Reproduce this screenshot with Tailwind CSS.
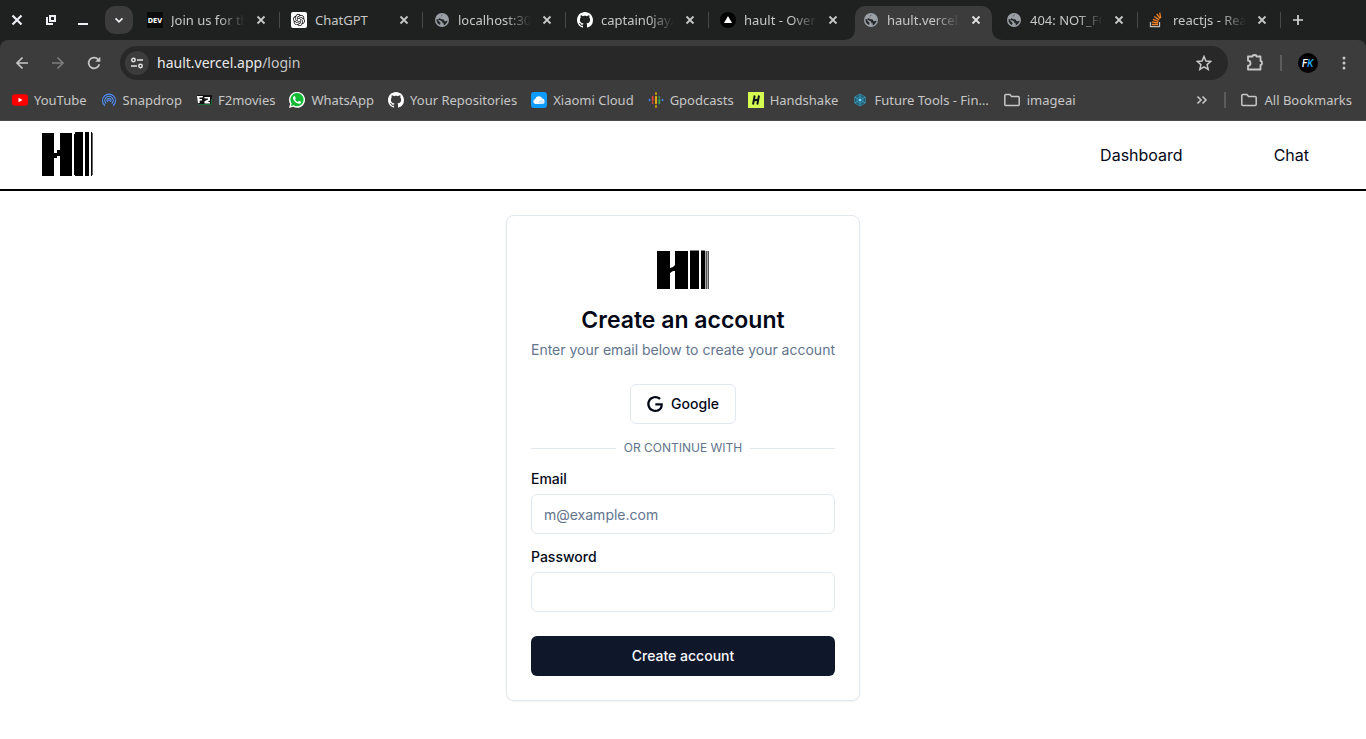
<!DOCTYPE html>
<html lang="en">
<head>
<meta charset="utf-8">
<meta name="viewport" content="width=device-width, initial-scale=1">
<title>hault</title>
<script src="https://cdn.jsdelivr.net/npm/@tailwindcss/browser@4"></script>
</head>
<body class="min-h-screen bg-white font-['Inter',sans-serif] text-[#020817]">

<svg class="hidden" aria-hidden="true">
  <symbol id="globe" viewBox="0 0 16 16"><circle cx="8" cy="8" r="7" fill="#9aa0a6"/><path fill="#25282b" d="M9 2.500C7.500 3 6.800 3.800 7.300 4.800c-1.500.2-1.600 1.600-.6 2.200.9.500 2.100 0 2.800.600.7.700.7 1.500 1.600 1.700.9.100 1.300-.6 2.500-.500-.4 2.200-1.900 3.900-3.900 4.600-.2-.8.100-1.400.4-2-.9.200-1.700-.3-1.900-1.200C7.900 8.800 5.500 8.500 4.700 7.800 4.200 7.300 3.300 7 2.500 7c-.3 2.700 1.200 5 3.500 6l.5-1.500c.2-.7-.2-1.100-.7-1.500-.8-.6-1.700-1.300-1.500-2.500z"/></symbol>
  <symbol id="close" viewBox="0 0 16 16"><path d="M4.500 4.500l7 7m0-7l-7 7" fill="none" stroke="currentColor" stroke-width="1.800"/></symbol>
  <symbol id="folder" viewBox="0 0 18 16"><path d="M2.800 2.500h4l1.800 2h6.600q1 0 1 1v7q0 1-1 1H2.800q-1 0-1-1v-9q0-1 1-1z" fill="none" stroke="currentColor" stroke-width="1.500"/></symbol>
  <symbol id="github" viewBox="0 0 16 16"><path fill="#fff" d="M8 0C3.58 0 0 3.58 0 8c0 3.54 2.29 6.53 5.47 7.59.4.07.55-.17.55-.38 0-.19-.01-.82-.01-1.490-2.010.37-2.530-.49-2.690-.94-.09-.23-.48-.94-.82-1.130-.28-.15-.68-.52-.01-.53.63-.01 1.080.58 1.230.82.72 1.210 1.870.87 2.330.66.07-.52.28-.87.51-1.070-1.780-.2-3.640-.89-3.640-3.950 0-.87.31-1.590.82-2.150-.08-.2-.36-1.020.08-2.120 0 0 .67-.21 2.200.82.64-.18 1.320-.27 2-.27s1.360.09 2 .27c1.530-1.040 2.200-.82 2.200-.82.44 1.100.16 1.920.08 2.120.51.56.82 1.270.82 2.150 0 3.070-1.870 3.750-3.650 3.950.29.25.54.73.54 1.480 0 1.070-.01 1.930-.01 2.200 0 .21.15.46.55.38A8.010 8.010 0 0 0 16 8c0-4.420-3.580-8-8-8z"/></symbol>
</svg>

<header class="bg-[#1f2120] font-['Noto_Sans',sans-serif] text-[13px] leading-5 text-[#c7c7c7]">
  <!-- Tab strip -->
  <div class="flex h-10 items-center">
    <div class="flex shrink-0 items-center pl-2 pr-1 text-[#eeeef4]">
      <button aria-label="Close window" class="flex w-[18px] justify-center"><svg class="size-4" viewBox="0 0 16 16"><path d="M3.500 3.500l9 9m0-9l-9 9" stroke="currentColor" stroke-width="2.200"/></svg></button>
      <button aria-label="Restore window" class="ml-4 flex w-[18px] justify-center"><svg class="size-4" viewBox="0 0 16 16" fill="none" stroke="currentColor" stroke-width="2"><path d="M7 4h5v5H7zM4 5v7h6"/></svg></button>
      <button aria-label="Minimize window" class="ml-3.5 flex w-[18px] justify-center"><svg class="size-4" viewBox="0 0 16 16"><path d="M3 12h10" stroke="currentColor" stroke-width="2"/></svg></button>
      <button aria-label="Search tabs" class="ml-[13px] flex size-7 items-center justify-center rounded-[10px] bg-[#3c3c3c]"><svg class="size-4" viewBox="0 0 16 16"><path d="M4.500 6.300L8 9.800l3.500-3.500" fill="none" stroke="currentColor" stroke-width="1.700"/></svg></button>
    </div>
    <div class="flex h-full min-w-0 items-center" role="tablist">
      <div role="tab" class="flex h-full w-[143px] min-w-0 items-center pl-2.5">
        <svg class="size-4 shrink-0" viewBox="0 0 16 16"><path fill="#0a0a0a" d="M0 0h16v16H0z"/><text x="8" y="11" text-anchor="middle" font-family="DejaVu Sans Condensed, Roboto, sans-serif" font-weight="700" font-size="7" fill="#fff">DEV</text></svg>
        <span class="ml-2 min-w-0 flex-1 overflow-hidden whitespace-nowrap [mask-image:linear-gradient(to_right,black_65%,transparent)]">Join us for th</span>
        <button aria-label="Close tab" class="ml-2 mr-[10px] shrink-0"><svg class="size-4"><use href="#close"/></svg></button><i class="h-4 w-px shrink-0 bg-[#47484a]"></i>
      </div>
      <div role="tab" class="flex h-full w-[143px] min-w-0 items-center pl-[11px]">
        <svg class="size-4 shrink-0" viewBox="0 0 32 32"><rect width="32" height="32" rx="4" fill="#fff"/><path transform="translate(4 4)" fill="#111" d="M22.2819 9.8211a5.9847 5.9847 0 0 0-.5157-4.9108 6.0462 6.0462 0 0 0-6.5098-2.9A6.0651 6.0651 0 0 0 4.9807 4.1818a5.9847 5.9847 0 0 0-3.9977 2.9 6.0462 6.0462 0 0 0 .7427 7.0966 5.98 5.98 0 0 0 .511 4.9107 6.051 6.051 0 0 0 6.5146 2.9001A5.9847 5.9847 0 0 0 13.2599 24a6.0557 6.0557 0 0 0 5.7718-4.2058 5.9894 5.9894 0 0 0 3.9977-2.9001 6.0557 6.0557 0 0 0-.7475-7.0729zm-9.022 12.6081a4.4755 4.4755 0 0 1-2.8764-1.0408l.1419-.0804 4.7783-2.7582a.7948.7948 0 0 0 .3927-.6813v-6.7369l2.02 1.1686a.071.071 0 0 1 .038.052v5.5826a4.504 4.504 0 0 1-4.4945 4.4944zm-9.6607-4.1254a4.4708 4.4708 0 0 1-.5346-3.0137l.142.0852 4.783 2.7582a.7712.7712 0 0 0 .7806 0l5.8428-3.3685v2.3324a.0804.0804 0 0 1-.0332.0615L9.74 19.9502a4.4992 4.4992 0 0 1-6.1408-1.6464zM2.3408 7.8956a4.485 4.485 0 0 1 2.3655-1.9728V11.6a.7664.7664 0 0 0 .3879.6765l5.8144 3.3543-2.0201 1.1685a.0757.0757 0 0 1-.071 0l-4.8303-2.7865A4.504 4.504 0 0 1 2.3408 7.872zm16.5963 3.8558L13.1038 8.364 15.1192 7.2a.0757.0757 0 0 1 .071 0l4.8303 2.7913a4.4944 4.4944 0 0 1-.6765 8.1042v-5.6772a.79.79 0 0 0-.407-.667zm2.0107-3.0231l-.142-.0852-4.7735-2.7818a.7759.7759 0 0 0-.7854 0L9.409 9.2297V6.8974a.0662.0662 0 0 1 .0284-.0615l4.8303-2.7866a4.4992 4.4992 0 0 1 6.6802 4.66zM8.3065 12.863l-2.02-1.1638a.0804.0804 0 0 1-.038-.0567V6.0742a4.4992 4.4992 0 0 1 7.3757-3.4537l-.142.0805L8.704 5.459a.7948.7948 0 0 0-.3927.6813zm1.0976-2.3654l2.602-1.4998 2.6069 1.4998v2.9994l-2.5974 1.4997-2.6067-1.4997Z"/></svg>
        <span class="ml-2 min-w-0 flex-1 overflow-hidden whitespace-nowrap">ChatGPT</span>
        <button aria-label="Close tab" class="ml-2 mr-[10px] shrink-0"><svg class="size-4"><use href="#close"/></svg></button><i class="h-4 w-px shrink-0 bg-[#47484a]"></i>
      </div>
      <div role="tab" class="flex h-full w-[143px] min-w-0 items-center pl-[11px]">
        <svg class="size-4 shrink-0"><use href="#globe"/></svg>
        <span class="ml-2 min-w-0 flex-1 overflow-hidden whitespace-nowrap [mask-image:linear-gradient(to_right,black_65%,transparent)]">localhost:30</span>
        <button aria-label="Close tab" class="ml-2 mr-[10px] shrink-0"><svg class="size-4"><use href="#close"/></svg></button><i class="h-4 w-px shrink-0 bg-[#47484a]"></i>
      </div>
      <div role="tab" class="flex h-full w-[143px] min-w-0 items-center pl-[11px]">
        <svg class="size-4 shrink-0"><use href="#github"/></svg>
        <span class="ml-2 min-w-0 flex-1 overflow-hidden whitespace-nowrap [mask-image:linear-gradient(to_right,black_65%,transparent)]">captain0jay/</span>
        <button aria-label="Close tab" class="ml-2 mr-[10px] shrink-0"><svg class="size-4"><use href="#close"/></svg></button><i class="h-4 w-px shrink-0 bg-[#47484a]"></i>
      </div>
      <div role="tab" class="flex h-full w-[143px] min-w-0 items-center pl-[11px]">
        <svg class="size-4 shrink-0" viewBox="0 0 16 16"><circle cx="8" cy="8" r="8" fill="#000"/><path fill="#fff" d="M8 4l4 7H4z"/></svg>
        <span class="ml-2 min-w-0 flex-1 overflow-hidden whitespace-nowrap [mask-image:linear-gradient(to_right,black_65%,transparent)]">hault - Over</span>
        <button aria-label="Close tab" class="ml-2 mr-[11px] shrink-0"><svg class="size-4"><use href="#close"/></svg></button>
      </div>
      <div role="tab" aria-selected="true" class="relative flex h-full w-[143px] min-w-0 items-end px-[3px]">
        <svg class="absolute bottom-0 -left-[7px] size-2.5" viewBox="0 0 10 10"><path fill="#3c3c3c" d="M10 0v10H0A10 10 0 0 0 10 0z"/></svg>
        <svg class="absolute bottom-0 -right-[7px] size-2.5" viewBox="0 0 10 10"><path fill="#3c3c3c" d="M0 0v10h10A10 10 0 0 1 0 0z"/></svg>
        <div class="flex h-[34px] w-full min-w-0 items-center rounded-t-[10px] bg-[#3c3c3c] pb-1.5 pl-2">
          <svg class="size-4 shrink-0"><use href="#globe"/></svg>
          <span class="ml-2 min-w-0 flex-1 overflow-hidden whitespace-nowrap [mask-image:linear-gradient(to_right,black_65%,transparent)]">hault.vercel.</span>
          <button aria-label="Close tab" class="ml-2 mr-2 shrink-0 text-[#e3e3e3]"><svg class="size-4"><use href="#close"/></svg></button>
        </div>
      </div>
      <div role="tab" class="flex h-full w-[143px] min-w-0 items-center pl-[11px]">
        <svg class="size-4 shrink-0"><use href="#globe"/></svg>
        <span class="ml-2 min-w-0 flex-1 overflow-hidden whitespace-nowrap [mask-image:linear-gradient(to_right,black_65%,transparent)]">404: NOT_FO</span>
        <button aria-label="Close tab" class="ml-2 mr-[10px] shrink-0"><svg class="size-4"><use href="#close"/></svg></button><i class="h-4 w-px shrink-0 bg-[#47484a]"></i>
      </div>
      <div role="tab" class="flex h-full w-[143px] min-w-0 items-center pl-[11px]">
        <svg class="size-4 shrink-0" viewBox="0 0 16 16" fill="none"><path d="M1.500 10v4.700h9V10" stroke="#bcbbbb" stroke-width="1.300"/><path d="M3 12.500h6M3.200 10l5.900.8M3.900 7.300l5.500 2M5.300 4.500l4.800 3.400M7.700 2l3.500 4.700M10.700.600l1 5.500" stroke="#f48024" stroke-width="1.300"/></svg>
        <span class="ml-2 min-w-0 flex-1 overflow-hidden whitespace-nowrap [mask-image:linear-gradient(to_right,black_65%,transparent)]">reactjs - Rea</span>
        <button aria-label="Close tab" class="ml-2 mr-[10px] shrink-0"><svg class="size-4"><use href="#close"/></svg></button><i class="h-4 w-px shrink-0 bg-[#47484a]"></i>
      </div>
    </div>
    <button aria-label="New tab" class="ml-[9px] shrink-0"><svg class="size-4" viewBox="0 0 16 16"><path d="M8 3v10M3 8h10" stroke="#d5d5d5" stroke-width="1.700"/></svg></button>
  </div>

  <div class="rounded-t-lg border-b border-[#4a4a4a] bg-[#3c3c3c]">
    <!-- Toolbar -->
    <div class="flex h-[46px] items-center pr-3.5 pl-3.5 text-[#c7c7c7]">
      <button aria-label="Back" class="shrink-0"><svg class="size-4" viewBox="0 0 16 16"><path d="M14 8H3m5.500-5.500L3 8l5.500 5.500" fill="none" stroke="currentColor" stroke-width="1.700"/></svg></button>
      <button aria-label="Forward" disabled class="ml-5 shrink-0 text-[#7c7c7c]"><svg class="size-4" viewBox="0 0 16 16"><path d="M2 8h11M7.500 2.500L13 8l-5.500 5.500" fill="none" stroke="currentColor" stroke-width="1.700"/></svg></button>
      <button aria-label="Reload" class="ml-5 shrink-0"><svg class="size-4" viewBox="0 0 16 16"><path d="M13.300 9.200A5.400 5.400 0 1 1 12 4.300l1.500 1.500" fill="none" stroke="currentColor" stroke-width="1.700"/><path d="M14.300 1.700v5.100H9.200z" fill="currentColor"/></svg></button>
      <div class="ml-[18px] flex h-[34px] min-w-0 flex-1 items-center rounded-full bg-[#282828] pr-4 pl-[5px]">
        <button aria-label="View site information" class="flex size-6 shrink-0 items-center justify-center rounded-full bg-[#3c3c3c]"><svg class="size-4" viewBox="0 0 16 16" fill="none" stroke="#e3e3e3" stroke-width="1.500"><circle cx="4.500" cy="5" r="1.700"/><path d="M8 5h6M2 11h6"/><circle cx="11.500" cy="11" r="1.700"/></svg></button>
        <div class="ml-2 flex-1 text-sm text-[#c7c7c7]" aria-label="Address bar" role="textbox"><span class="text-[#e8e8e8]">hault.vercel.app</span>/login</div>
        <button aria-label="Bookmark this tab" class="shrink-0"><svg class="size-4" viewBox="0 0 16 16"><path d="M8 1.500l1.900 4.500 4.900.4-3.700 3.200 1.100 4.800L8 11.800l-4.200 2.600 1.100-4.800-3.700-3.200 4.900-.4z" fill="none" stroke="currentColor" stroke-width="1.500"/></svg></button>
      </div>
      <button aria-label="Extensions" class="ml-[17px] shrink-0"><svg class="size-5" viewBox="0 0 20 20"><path d="M3 3.500h4.500a2 1.500 0 0 1 4 0H15.500V8a1.500 2 0 0 1 0 4v4.500H3V12.700a2.500 2.500 0 0 0 0-5z" fill="none" stroke="currentColor" stroke-width="1.800" stroke-linejoin="round"/></svg></button>
      <i class="ml-[15px] h-4 w-0.5 shrink-0 bg-[#5c5c5c]"></i>
      <button aria-label="Profile" class="ml-4 shrink-0"><svg class="size-5" viewBox="0 0 20 20"><circle cx="10" cy="10" r="10" fill="#000"/><text x="4" y="14" font-family="Roboto, sans-serif" font-style="italic" font-weight="500" font-size="10" fill="#fff">F<tspan fill="#22a7f0">K</tspan></text></svg></button>
      <button aria-label="Menu" class="ml-[18px] shrink-0"><svg class="size-4" viewBox="0 0 16 16" fill="currentColor"><circle cx="8" cy="3" r="1.500"/><circle cx="8" cy="8" r="1.500"/><circle cx="8" cy="13" r="1.500"/></svg></button>
    </div>
    <!-- Bookmarks -->
    <nav aria-label="Bookmarks" class="flex h-[34px] items-center gap-3.5 pr-3.5 pb-1.5 pl-3 whitespace-nowrap">
      <a href="#" class="flex items-center gap-1.5"><svg class="size-4" viewBox="0 0 16 16"><rect y="2.300" width="16" height="11.400" rx="3" fill="#f00"/><path d="M6.500 5.700L10.500 8l-4 2.300z" fill="#fff"/></svg>YouTube</a>
      <a href="#" class="flex items-center gap-1.5"><svg class="size-4" viewBox="0 0 16 16" fill="none" stroke="#4f8df5" stroke-width="1.100"><path d="M4 13.700a6.500 6.500 0 1 1 8 0M5.200 11.600a4.200 4.200 0 1 1 5.600 0"/><path d="M6.700 9.800a2 2 0 1 1 2.600 0"/><circle cx="8" cy="8.300" r=".4" fill="#4f8df5"/></svg>Snapdrop</a>
      <a href="#" class="flex items-center gap-1.5"><svg class="size-4" viewBox="0 0 16 16"><path fill="#111" d="M1 3h15v10H3V9z"/><path d="M3 12.500h12.500V7" stroke="#176b35" fill="none"/><path d="M1 4h6l-.5 1.500H3.500V7H6v1.500H3.700V11H2zM8.500 5H14v3.500L11.500 10H14v1.500H8.500V9.300L12 7.500V6.500H8.500z" fill="#fff"/></svg>F2movies</a>
      <a href="#" class="flex items-center gap-1.5"><svg class="size-4" viewBox="0 0 24 24"><path fill="#fff" d="M0 24l1.700-6.200A12 12 0 1 1 6.400 22.300z"/><path fill="#12b932" d="M2.900 21.100l1.100-3.800A9.900 9.900 0 1 1 7 20z"/><path fill="#fff" d="M17.472 14.382c-.297-.149-1.758-.867-2.030-.967-.273-.099-.471-.148-.67.15-.197.297-.767.966-.94 1.164-.173.199-.347.223-.644.075-.297-.15-1.255-.463-2.390-1.475-.883-.788-1.480-1.761-1.653-2.059-.173-.297-.018-.458.13-.606.134-.133.298-.347.446-.52.149-.174.198-.298.298-.497.099-.198.050-.371-.025-.520-.075-.149-.669-1.612-.916-2.207-.242-.579-.487-.500-.669-.510-.173-.008-.371-.010-.570-.010-.198 0-.520.074-.792.372-.272.297-1.040 1.016-1.040 2.479 0 1.462 1.065 2.875 1.213 3.074.149.198 2.096 3.200 5.077 4.487.709.306 1.262.489 1.694.625.712.227 1.360.195 1.871.118.571-.085 1.758-.719 2.006-1.413.248-.694.248-1.289.173-1.413-.074-.124-.272-.198-.570-.347z"/></svg>WhatsApp</a>
      <a href="#" class="flex items-center gap-1.5"><svg class="size-4"><use href="#github"/></svg>Your Repositories</a>
      <a href="#" class="flex items-center gap-1.5"><svg class="size-4" viewBox="0 0 16 16"><rect width="16" height="16" rx="3" fill="#0d9bff"/><path d="M4.500 12a2.500 2.500 0 0 1-.3-4.900 3.700 3.700 0 0 1 7-.6A2.800 2.800 0 0 1 11.500 12z" fill="#fff"/><path d="M8 12a3 3 0 0 1 3-4.500 2.500 2.500 0 0 1 1 4.400z" fill="#cfe9ff"/></svg>Xiaomi Cloud</a>
      <a href="#" class="flex items-center gap-1.5"><svg class="size-4" viewBox="0 0 16 16" stroke-width="1.700" stroke-linecap="round"><path d="M1.500 7.700v.6M14.500 7.700v.6" stroke="#4285f4"/><path d="M4.700 4.700v3.800M4.700 10.700v.3" stroke="#ea4335"/><path d="M11.300 5v.300M11.300 7.500v3.800" stroke="#34a853"/><path d="M8 1.200v.6M8 4.500v7M8 14.200v.600" stroke="#fbbc04"/></svg>Gpodcasts</a>
      <a href="#" class="flex items-center gap-1.5"><svg class="size-4" viewBox="0 0 16 16"><path fill="#d3fb52" d="M0 0h16v16H0z"/><path d="M6.700 3.500L5 12.500M11 3.500L9.300 12.500M6 8.500l4-1" stroke="#10141a" stroke-width="2"/></svg>Handshake</a>
      <a href="#" class="flex items-center gap-1.5"><svg class="size-4" viewBox="0 0 16 16"><path d="M8 2l5.300 3v6L8 14l-5.300-3V5z" fill="#22566b" stroke="#3790b0" stroke-width=".8"/><path d="M8 2v12M2.700 5l10.600 6M13.300 5L2.700 11M8 4.500l3 1.800v3.500L8 11.500 5 9.800V6.300z" fill="none" stroke="#3fb3d8" stroke-width=".6"/><circle cx="8" cy="8" r="1.300" fill="#6fe0ff"/></svg>Future Tools - Fin…</a>
      <a href="#" class="flex items-center gap-1.5"><svg class="h-4 w-[18px]"><use href="#folder"/></svg>imageai</a>
      <button aria-label="More bookmarks" class="ml-auto shrink-0"><svg class="size-4" viewBox="0 0 16 16"><path d="M3.500 4.500L7 8l-3.500 3.500M8.500 4.500L12 8l-3.500 3.500" fill="none" stroke="currentColor" stroke-width="1.600"/></svg></button>
      <i class="h-4 w-0.5 shrink-0 bg-[#5c5c5c]"></i>
      <a href="#" class="flex shrink-0 items-center gap-1.5"><svg class="h-4 w-[18px]"><use href="#folder"/></svg>All Bookmarks</a>
    </nav>
  </div>
</header>

<nav aria-label="Main" class="flex h-[70px] items-center justify-between border-b-2 border-black pr-[57px] pl-[42px]">
  <a href="#" aria-label="Hault home" class="pb-0.5"><svg class="h-11 w-[51px]" viewBox="0 0 51 44" shape-rendering="crispEdges"><path d="M0 1h12v20h3v-3h3V1h12v43H18V24h-3v2h-3v18H0zM32 2h1V0h8v44h-8v-1h-1zM43 0h4v44h-4zM49 0h1v44h-1z"/><path fill="#666" d="M50 1h1v42h-1z"/></svg></a>
  <div class="flex gap-[91px] text-base"><a href="#">Dashboard</a><a href="#">Chat</a></div>
</nav>

<main class="flex justify-center py-6">
  <form class="flex flex-col rounded-lg border border-slate-200 bg-white p-6 shadow-xs">
    <svg class="mb-1 h-[60px] w-[60px] self-center" viewBox="0 0 60 60" role="img" aria-label="Hault"><path d="M4 11h13v17l3-1 2-2V11h13v38H22V31h-2l-3 2v16H4zM37 10.500h9V49h-9zM48 10.500h4V49h-4z"/><path fill="#555" d="M52.500 11h1.500v38h-1.500zM54.500 11H56v38h-1.500z"/></svg>
    <h1 class="text-center text-[23px] leading-8 font-semibold">Create an account</h1>
    <p class="mt-1 text-center text-sm text-slate-500">Enter your email below to create your account</p>
    <button type="button" class="mt-6 flex h-10 items-center gap-2 self-center rounded-md border border-slate-200 px-4 text-sm font-medium"><svg class="size-4" viewBox="0 0 24 24"><path fill="currentColor" d="M12.480 10.920v3.280h7.840c-.24 1.840-.853 3.187-1.787 4.133-1.147 1.147-2.933 2.400-6.053 2.400-4.827 0-8.600-3.893-8.600-8.720s3.773-8.720 8.600-8.720c2.600 0 4.507 1.027 5.907 2.347l2.307-2.307C18.747 1.440 16.133 0 12.480 0 5.867 0 .307 5.387.307 12s5.560 12 12.173 12c3.573 0 6.267-1.173 8.373-3.360 2.160-2.160 2.840-5.213 2.840-7.667 0-.760-.053-1.467-.173-2.053H12.480z"/></svg>Google</button>
    <div class="mt-4 flex items-center gap-2 text-xs text-slate-500"><i class="h-px flex-1 bg-slate-200"></i>OR CONTINUE WITH<i class="h-px flex-1 bg-slate-200"></i></div>
    <label for="email" class="mt-4 self-start text-sm leading-none font-medium">Email</label>
    <input id="email" type="email" placeholder="m@example.com" class="mt-2 h-10 w-full rounded-md border border-slate-200 px-3 text-sm placeholder:text-slate-500">
    <label for="password" class="mt-4 self-start text-sm leading-none font-medium">Password</label>
    <input id="password" type="password" class="mt-2 h-10 w-full rounded-md border border-slate-200 px-3 text-sm">
    <button type="submit" class="mt-6 h-10 rounded-md bg-[#0f172a] text-sm font-medium text-slate-50">Create account</button>
  </form>
</main>
</body>
</html>
